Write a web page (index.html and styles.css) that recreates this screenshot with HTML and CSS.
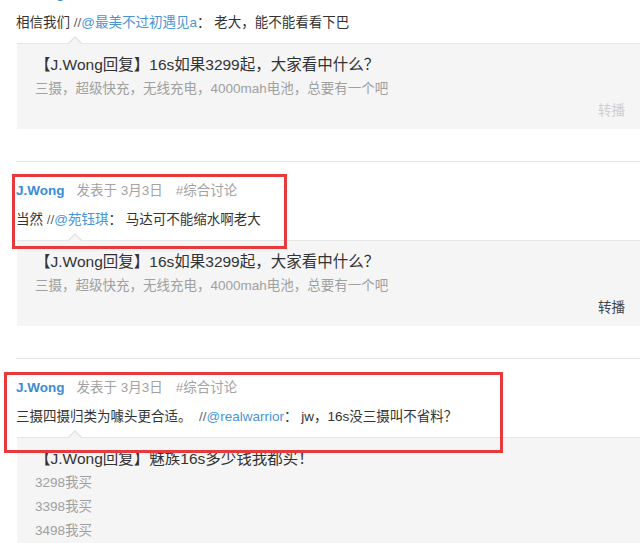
FILE: index.html
```html
<!DOCTYPE html>
<html lang="zh-CN">
<head>
<meta charset="utf-8">
<title>Feed</title>
<link rel="stylesheet" href="styles.css">
</head>
<body>
<div class="feed">
  <div class="post post-first">
    <div class="head"><a class="name">J.Wong</a><span class="meta">发表于 3月3日</span><span class="meta tag">#综合讨论</span></div>
    <div class="text">相信我们 <span class="sl">//</span><a class="at">@最美不过初遇见a</a>： 老大，能不能看看下巴</div>
    <div class="quote">
      <span class="arrow"></span>
      <div class="q-title">【J.Wong回复】16s如果3299起，大家看中什么？</div>
      <div class="q-line">三摄，超级快充，无线充电，4000mah电池，总要有一个吧</div>
      <div class="q-foot"><span class="repost faded">转播</span></div>
    </div>
  </div>

  <div class="post">
    <div class="head"><a class="name">J.Wong</a><span class="meta">发表于 3月3日</span><span class="meta tag">#综合讨论</span></div>
    <div class="text">当然 <span class="sl">//</span><a class="at">@苑钰琪</a>： 马达可不能缩水啊老大</div>
    <div class="quote">
      <span class="arrow"></span>
      <div class="q-title">【J.Wong回复】16s如果3299起，大家看中什么？</div>
      <div class="q-line">三摄，超级快充，无线充电，4000mah电池，总要有一个吧</div>
      <div class="q-foot"><span class="repost">转播</span></div>
    </div>
    <div class="mark mark-a"></div>
  </div>

  <div class="post">
    <div class="head"><a class="name">J.Wong</a><span class="meta">发表于 3月3日</span><span class="meta tag">#综合讨论</span></div>
    <div class="text">三摄四摄归类为噱头更合适。&nbsp; <span class="sl">//</span><a class="at">@realwarrior</a>： jw，16s没三摄叫不省料？</div>
    <div class="quote">
      <span class="arrow"></span>
      <div class="q-title">【J.Wong回复】魅族16s多少钱我都买！</div>
      <div class="q-line">3298我买</div>
      <div class="q-line">3398我买</div>
      <div class="q-line">3498我买</div>
    </div>
    <div class="mark mark-b"></div>
  </div>
</div>
</body>
</html>
```

FILE: styles.css
```css
html, body {
  margin: 0;
  padding: 0;
  background: #ffffff;
}
body {
  width: 640px;
  height: 543px;
  overflow: hidden;
  font-family: "Liberation Sans", "Noto Sans CJK SC", sans-serif;
  color: #333333;
  font-size: 13.5px;
}
.feed {
  padding-left: 16px;
}
.post {
  position: relative;
  border-top: 1px solid #e6e6e6;
  padding: 19px 0 32px 0;
}
.post-first {
  border-top: none;
  margin-top: -35px;
}
.head {
  display: flex;
  align-items: center;
  height: 20px;
  line-height: 20px;
}
.name {
  color: #3d8bd4;
  font-weight: bold;
  font-size: 13.5px;
  margin-right: 12px;
}
.meta {
  color: #a3a3a3;
  font-size: 13.5px;
}
.tag {
  margin-left: 13px;
}
.text {
  margin-top: 9px;
  line-height: 20px;
  color: #333333;
  white-space: nowrap;
}
.sl {
  color: #666666;
}
.at {
  color: #4a94d6;
}
.quote {
  position: relative;
  margin-top: 10px;
  margin-left: 1px;
  background: #f5f5f5;
  border-top: 1px solid #e6e6e6;
  padding: 9px 15px 8px 18px;
}
.arrow {
  position: absolute;
  left: 51px;
  top: -8px;
  width: 0;
  height: 0;
  border-left: 7px solid transparent;
  border-right: 7px solid transparent;
  border-bottom: 7px solid #e3e3e3;
}
.arrow::after {
  content: "";
  position: absolute;
  left: -6px;
  top: 2px;
  width: 0;
  height: 0;
  border-left: 6px solid transparent;
  border-right: 6px solid transparent;
  border-bottom: 6px solid #f5f5f5;
}
.q-title {
  font-size: 15.5px;
  line-height: 24px;
  color: #333333;
  white-space: nowrap;
}
.q-line {
  font-size: 13.5px;
  line-height: 24px;
  color: #a0a0a0;
  white-space: nowrap;
}
.q-foot {
  display: flex;
  justify-content: flex-end;
  line-height: 20px;
}
.repost {
  font-size: 13.5px;
  color: #444444;
}
.repost.faded {
  color: #cfcfcf;
}
.mark {
  position: absolute;
  box-sizing: border-box;
  border: 3px solid #e8393c;
}
.mark-a {
  left: -4px;
  top: 12px;
  width: 275px;
  height: 75px;
}
.mark-b {
  left: -12px;
  top: 13px;
  width: 499px;
  height: 81px;
}
```
